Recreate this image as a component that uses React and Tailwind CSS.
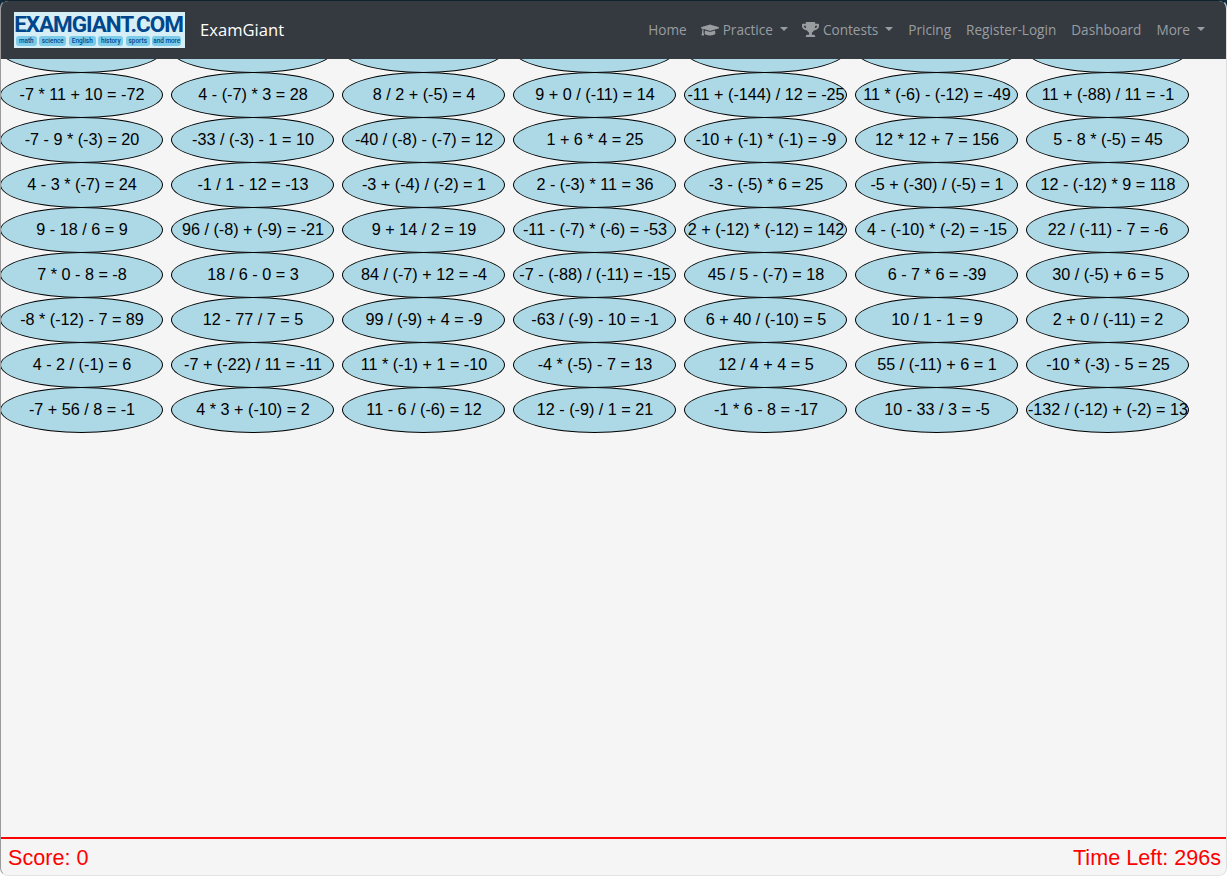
import React from 'react';
import { FaGraduationCap, FaTrophy } from 'react-icons/fa';

// bai toan, moi hang 7 o
const rows = [
  ['', '', '', '', '', '', ''],
  ['-7 * 11 + 10 = -72', '4 - (-7) * 3 = 28', '8 / 2 + (-5) = 4', '9 + 0 / (-11) = 14', '-11 + (-144) / 12 = -25', '11 * (-6) - (-12) = -49', '11 + (-88) / 11 = -1'],
  ['-7 - 9 * (-3) = 20', '-33 / (-3) - 1 = 10', '-40 / (-8) - (-7) = 12', '1 + 6 * 4 = 25', '-10 + (-1) * (-1) = -9', '12 * 12 + 7 = 156', '5 - 8 * (-5) = 45'],
  ['4 - 3 * (-7) = 24', '-1 / 1 - 12 = -13', '-3 + (-4) / (-2) = 1', '2 - (-3) * 11 = 36', '-3 - (-5) * 6 = 25', '-5 + (-30) / (-5) = 1', '12 - (-12) * 9 = 118'],
  ['9 - 18 / 6 = 9', '96 / (-8) + (-9) = -21', '9 + 14 / 2 = 19', '-11 - (-7) * (-6) = -53', '2 + (-12) * (-12) = 142', '4 - (-10) * (-2) = -15', '22 / (-11) - 7 = -6'],
  ['7 * 0 - 8 = -8', '18 / 6 - 0 = 3', '84 / (-7) + 12 = -4', '-7 - (-88) / (-11) = -15', '45 / 5 - (-7) = 18', '6 - 7 * 6 = -39', '30 / (-5) + 6 = 5'],
  ['-8 * (-12) - 7 = 89', '12 - 77 / 7 = 5', '99 / (-9) + 4 = -9', '-63 / (-9) - 10 = -1', '6 + 40 / (-10) = 5', '10 / 1 - 1 = 9', '2 + 0 / (-11) = 2'],
  ['4 - 2 / (-1) = 6', '-7 + (-22) / 11 = -11', '11 * (-1) + 1 = -10', '-4 * (-5) - 7 = 13', '12 / 4 + 4 = 5', '55 / (-11) + 6 = 1', '-10 * (-3) - 5 = 25'],
  ['-7 + 56 / 8 = -1', '4 * 3 + (-10) = 2', '11 - 6 / (-6) = 12', '12 - (-9) / 1 = 21', '-1 * 6 - 8 = -17', '10 - 33 / 3 = -5', '-132 / (-12) + (-2) = 13'],
];

const pills = [
  { label: 'math', w: 'w-[21px]' },
  { label: 'science', w: 'w-[27px]' },
  { label: 'English', w: 'w-[27px]' },
  { label: 'history', w: 'w-[25px]' },
  { label: 'sports', w: 'w-[24px]' },
  { label: 'and more', w: 'w-[29px]' },
];

function Caret() {
  return <span className="ml-[7px] mt-[-2px] inline-block border-x-[4px] border-t-[4px] border-x-transparent border-t-[#9a9da0]" />;
}

function Logo() {
  return (
    <div className="flex h-[36px] w-[171px] flex-col items-center overflow-hidden bg-[#d6eef5] pr-[2px] font-['Roboto',sans-serif]">
      <div className="mt-[1px] h-[23px] whitespace-nowrap text-[22.5px] font-bold leading-[23px] tracking-[-1.05px] text-[#00468c]">EXAMGIANT.COM</div>
      <div className="flex gap-[2.5px]">
        {pills.map((p) => (
          <span key={p.label} className={`flex h-[10px] items-center justify-center whitespace-nowrap rounded-[3px] bg-[#7ccbe8] text-[6.4px] font-medium leading-none text-[#00468c] ${p.w}`}>{p.label}</span>
        ))}
      </div>
    </div>
  );
}

function Navbar() {
  return (
    <nav className="flex h-[58px] shrink-0 items-center bg-[#343a40] pl-[13px] pr-[21px] font-['Open_Sans',sans-serif]">
      <Logo />
      <span className="ml-[15px] text-[16.6px] text-white">ExamGiant</span>
      <div className="ml-auto flex items-center gap-[15px] text-[13.6px] text-[#9a9da0]">
        <span className="mr-[-1px]">Home</span>
        <span className="mr-[-1px] flex items-center">
          <FaGraduationCap className="mr-[4px] text-[18px]" />Practice<Caret />
        </span>
        <span className="flex items-center">
          <FaTrophy className="mr-[4px] text-[17px]" />Contests<Caret />
        </span>
        <span>Pricing</span>
        <span>Register-Login</span>
        <span>Dashboard</span>
        <span className="flex items-center">More<Caret /></span>
      </div>
    </nav>
  );
}

function Problem({ text }) {
  return (
    <div className="flex h-[46px] w-[163px] items-center justify-center whitespace-nowrap rounded-[50%] border border-black bg-[#add8e6] pb-[2px] pl-[1px] text-[16.2px] text-black">
      {text}
    </div>
  );
}

export default function App() {
  return (
    <div className="h-[876px] w-[1227px] bg-[linear-gradient(#0f2a3a_50%,#ffffff_50%)]">
      <div className="flex h-full w-full flex-col overflow-hidden rounded-[8px] border border-[#10232f] border-b-[#e4e4e4] border-l-[#9a9a9a] border-r-[#dddddd] bg-[#f5f5f5] font-['Liberation_Sans',Arial,sans-serif]">
        <Navbar />
        <main className="min-h-0 flex-1 overflow-hidden">
          <div className="ml-[-1px] mt-[-32px] grid auto-rows-[45px] grid-cols-[repeat(7,163px)] gap-x-2">
            {rows.flat().map((t, i) => <Problem key={i} text={t} />)}
          </div>
        </main>
        <footer className="flex h-[38px] shrink-0 items-center justify-between border-t-2 border-[#ff0000] pl-[7px] pr-[5px] pt-[2px] text-[21.6px] text-[#ff0000]">
          <span>Score: 0</span>
          <span>Time Left: 296s</span>
        </footer>
      </div>
    </div>
  );
}
